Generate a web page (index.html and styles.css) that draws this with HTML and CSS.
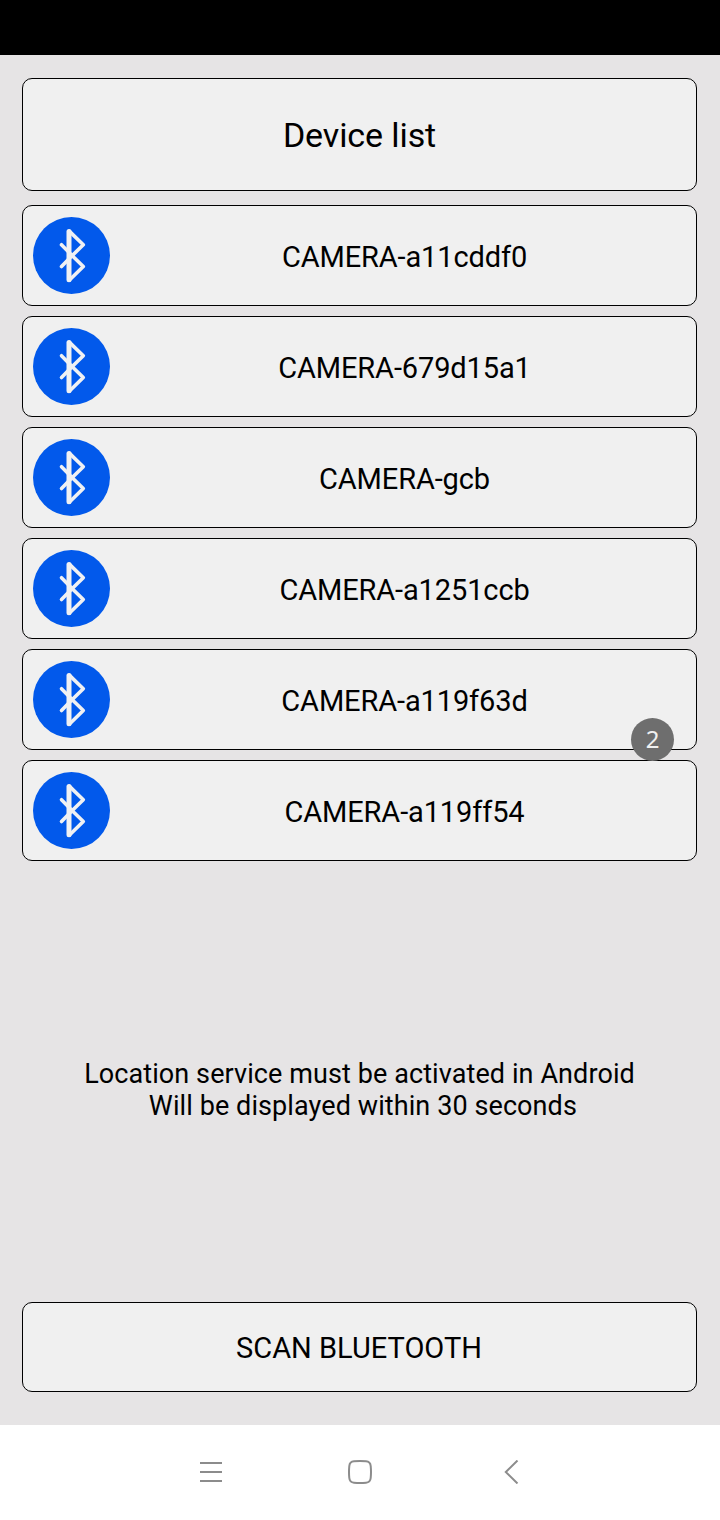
FILE: index.html
```html
<!DOCTYPE html>
<html lang="en">
<head>
  <meta charset="UTF-8">
  <title>Device list</title>
  <meta name="viewport" content="width=device-width, initial-scale=1.0">
  <link rel="stylesheet" href="styles.css">
</head>
<body>

  <svg class="sprite" width="0" height="0">
    <symbol id="bluetooth" viewBox="0 0 77 77">
      <circle cx="38.5" cy="38.5" r="38.5" fill="#0259eb"/>
      <g fill="none" stroke="#f0f1f3" stroke-linecap="round" stroke-linejoin="round">
        <path d="M28.5 27.7 L39 38.4 L50.3 49.5 L36.5 63 M28.5 49.5 L39 38.8 L50.3 27.7 L36.5 14.4" stroke-width="3.6"/>
        <path d="M36 14.6 V62.8" stroke-width="5"/>
      </g>
    </symbol>
  </svg>

  <div class="status-bar"></div>

  <main>
    <h1 class="box title">Device list</h1>

    <ul class="devices">
      <li class="box device"><svg class="icon"><use href="#bluetooth"/></svg><span class="name">CAMERA-a11cddf0</span></li>
      <li class="box device"><svg class="icon"><use href="#bluetooth"/></svg><span class="name">CAMERA-679d15a1</span></li>
      <li class="box device"><svg class="icon"><use href="#bluetooth"/></svg><span class="name">CAMERA-gcb</span></li>
      <li class="box device"><svg class="icon"><use href="#bluetooth"/></svg><span class="name">CAMERA-a1251ccb</span></li>
      <li class="box device"><svg class="icon"><use href="#bluetooth"/></svg><span class="name">CAMERA-a119f63d</span><span class="badge">2</span></li>
      <li class="box device"><svg class="icon"><use href="#bluetooth"/></svg><span class="name">CAMERA-a119ff54</span></li>
    </ul>

    <p class="note">Location service must be activated in Android<br>&nbsp;Will be displayed within 30 seconds</p>

    <button class="box scan">SCAN BLUETOOTH</button>
  </main>

  <nav>
    <svg width="24" height="24" viewBox="0 0 24 24"><path d="M2 3 H24 M2 12 H24 M2 21 H24"/></svg>
    <svg width="24" height="24" viewBox="0 0 24 24"><path d="M6 1.3 Q12 0.7 18 1.3 Q22.3 1.7 22.7 6 Q23.3 12 22.7 18 Q22.3 22.3 18 22.7 Q12 23.3 6 22.7 Q1.7 22.3 1.3 18 Q0.7 12 1.3 6 Q1.7 1.7 6 1.3 Z"/></svg>
    <svg width="24" height="24" viewBox="0 0 24 24"><path d="M19.5 0.5 L7.8 12 L19.5 23.5"/></svg>
  </nav>

</body>
</html>
```
FILE: styles.css
```css
* {
  box-sizing: border-box;
}

body {
  margin: 0;
  height: 1520px;
  display: flex;
  flex-direction: column;
  font-family: Roboto, "Liberation Sans", sans-serif;
  color: #000;
  background: #e6e4e5;
}

.sprite {
  display: none;
}

.status-bar {
  height: 55px;
  background: #000;
}

main {
  flex: 1;
  display: flex;
  flex-direction: column;
  padding: 23px 23px 33px 22px;
}

.box {
  background: #f0f0f0;
  border: 1px solid #000;
  border-radius: 10px;
}

.title {
  height: 113px;
  margin: 0 0 14px;
  font-size: 34px;
  line-height: 113px;
  letter-spacing: -0.1px;
  font-weight: 400;
  text-align: center;
}

.devices {
  display: flex;
  flex-direction: column;
  gap: 10px;
  margin: 0;
  padding: 0;
  list-style: none;
}

.device {
  position: relative;
  display: flex;
  align-items: center;
  height: 101px;
  padding: 0 0 0 10px;
}

.icon {
  width: 77px;
  height: 77px;
}

.name {
  flex: 1;
  padding: 3px 0 0 3px;
  font-size: 29px;
  letter-spacing: -0.12px;
  text-align: center;
}

.badge {
  position: absolute;
  right: 22px;
  bottom: -12px;
  z-index: 1;
  width: 43px;
  height: 43px;
  border-radius: 50%;
  background: #6e6e6e;
  color: #f0f0f0;
  font-family: "Noto Sans", sans-serif;
  font-size: 24px;
  line-height: 41px;
  text-align: center;
}

.note {
  margin: auto 0 180px;
  font-size: 27px;
  line-height: 32px;
  letter-spacing: 0.09px;
  text-align: center;
}

.scan {
  height: 90px;
  padding: 2px 1px 0 0;
  font-family: inherit;
  font-size: 29px;
  color: #000;
}

nav {
  display: flex;
  justify-content: center;
  gap: 126px;
  height: 95px;
  padding-top: 35px;
  background: #fff;
}

nav svg {
  fill: none;
  stroke: #8c8c8c;
  stroke-width: 2;
}
```
